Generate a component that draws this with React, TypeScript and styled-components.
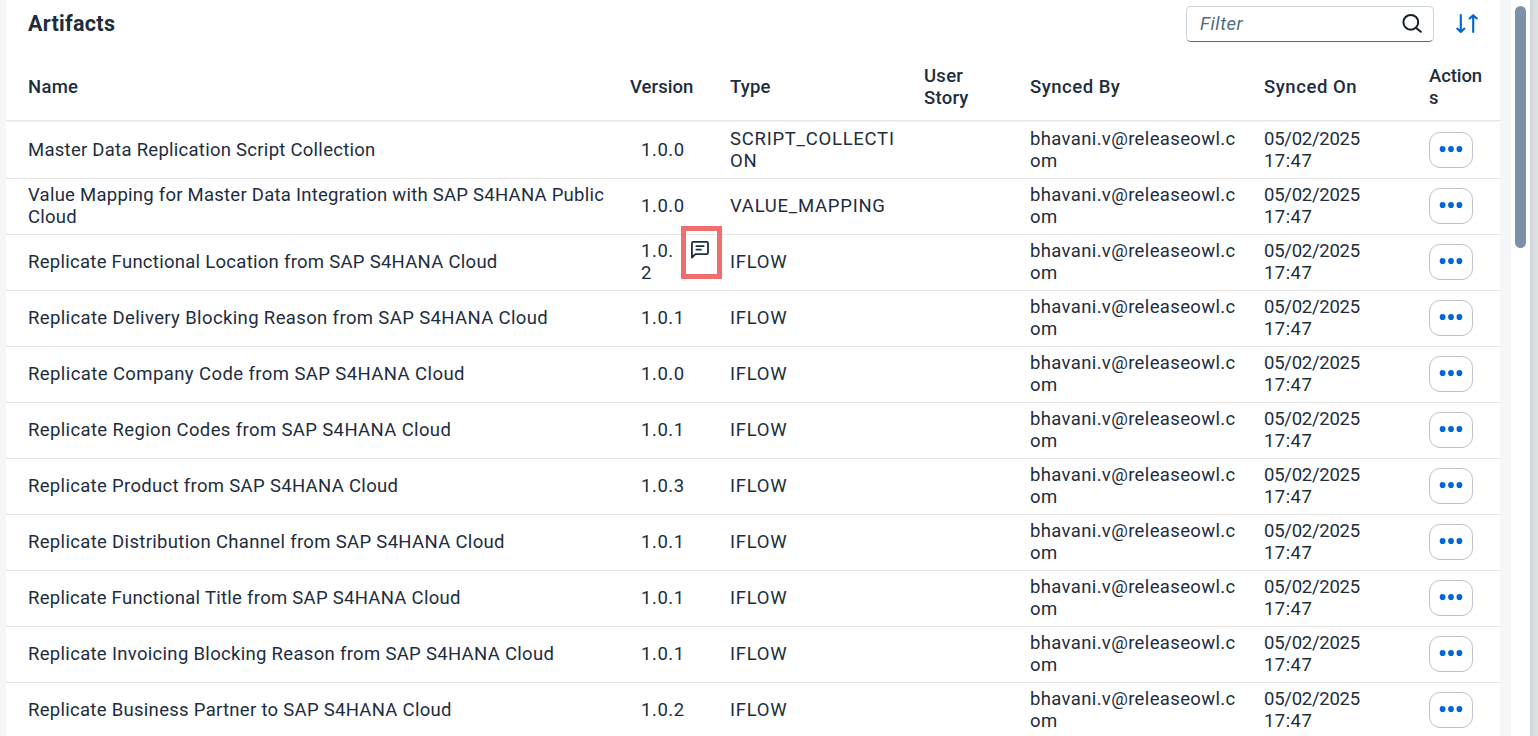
import React from "react";
import styled, { createGlobalStyle } from "styled-components";

const GlobalStyle = createGlobalStyle`
  * { box-sizing: border-box; }
  body {
    margin: 0;
    overflow: hidden;
    background: #ffffff;
    color: #1d2d3e;
    font: 400 18.5px/22px Roboto, "Noto Sans", sans-serif;
  }
`;

const Page = styled.div`
  display: flex;
  width: 1538px;
  height: 736px;
  overflow: hidden;
  background: #f5f6f7;
`;

const Panel = styled.main`
  width: 1494px;
  margin-left: 6px;
  background: #ffffff;
`;

const Toolbar = styled.header`
  display: flex;
  align-items: center;
  height: 54px;
  padding: 0 21px 6px 22px;
`;

const Title = styled.h1`
  flex: 1;
  margin: 0;
  padding-bottom: 1px;
  font-size: 21.5px;
  line-height: 26px;
  font-weight: 700;
  letter-spacing: 0.3px;
`;

const FilterField = styled.label`
  display: flex;
  align-items: center;
  justify-content: space-between;
  width: 248px;
  height: 36px;
  padding: 0 10px 0 13px;
  border: 1px solid #ccd5dd;
  border-bottom-color: #556b82;
  border-radius: 5px;
`;

const FilterInput = styled.input`
  width: 180px;
  padding: 0;
  border: 0;
  outline: 0;
  background: none;
  color: inherit;
  font: inherit;
  letter-spacing: 0.5px;
  &::placeholder {
    color: #556b82;
    font-style: italic;
    opacity: 1;
  }
`;

const SortButton = styled.button`
  display: flex;
  margin-left: 21px;
  padding: 0;
  border: 0;
  background: none;
  color: #0064d9;
`;

const Row = styled.div`
  display: grid;
  grid-template-columns: 602px 100px 194px 106px 234px 165px 1fr;
  align-items: center;
  height: 56px;
  padding-left: 22px;
  border-bottom: 1px solid #e5e5e5;
`;

const HeadRow = styled(Row)`
  height: 67px;
  font-weight: 500;
  box-shadow: 0 1px 0 #f4f4f4;
`;

const FirstRow = styled(Row)`
  height: 58px;
  padding-top: 2px;
`;

const HeadCell = styled.div<{ $track?: number }>`
  white-space: pre;
  letter-spacing: ${(p) => p.$track ?? 0.05}px;
`;

const Cell = styled(HeadCell)`
  padding-bottom: 2px;
`;

const VersionCell = styled(Cell)`
  position: relative;
  padding-left: 11px;
`;

const Time = styled.div`
  letter-spacing: 0.45px;
`;

const Highlight = styled.div`
  position: absolute;
  left: 51px;
  top: -14px;
  width: 41px;
  height: 53px;
  padding: 9px 0 0 4px;
  border: 5px solid rgba(238, 86, 86, 0.86);
`;

const ActionButton = styled.button`
  display: flex;
  align-items: center;
  justify-content: center;
  width: 44px;
  height: 36px;
  margin-top: -1px;
  padding: 0 0 2px;
  border: 1px solid #bcc3ca;
  border-radius: 11px;
  background: #ffffff;
  color: #0064d9;
`;

const Gutter = styled.div`
  width: 11px;
`;

const ScrollTrack = styled.div`
  width: 19px;
  padding: 6px 4px 0;
  background: #ffffff;
`;

const ScrollThumb = styled.div`
  width: 11px;
  height: 242px;
  border-radius: 6px;
  background: #7b91a8;
`;

const Backdrop = styled.div`
  flex: 1;
  background: linear-gradient(90deg, #cdd2d6 0, #d9dde1 3px, #dde2e5 8px);
`;

const SearchIcon = () => (
  <svg width="22" height="22" viewBox="0 0 22 22" fill="none" stroke="#131e29" strokeWidth="2" strokeLinecap="round">
    <circle cx="9.8" cy="9.3" r="7.4" />
    <path d="M15.2 15 19.8 18.8" />
  </svg>
);

const SortIcon = () => (
  <svg width="24" height="22" viewBox="0 0 24 22" fill="none" stroke="currentColor" strokeWidth="2.1" strokeLinecap="round" strokeLinejoin="round">
    <path d="M5.8 2v16.8M2.2 15.6l3.6 3.3 3.6-3.3M18.2 19V2.2M14.6 5.5l3.6-3.3 3.6 3.3" />
  </svg>
);

const NoteIcon = () => (
  <svg width="20" height="20" viewBox="0 0 20 20" fill="none" stroke="#1d2d3e" strokeWidth="1.8" strokeLinecap="round" strokeLinejoin="round">
    <path d="M1.9 17.6V3.2Q1.9 1.9 3.2 1.9H16.7Q18 1.9 18 3.2V12.8Q18 14.1 16.7 14.1H5.4Z" />
    <path d="M6.4 6.2h7.2M6.4 9.7h4.5" />
  </svg>
);

const MoreIcon = () => (
  <svg width="24" height="8" viewBox="0 0 24 8" fill="currentColor">
    <ellipse cx="3.6" cy="4" rx="2.9" ry="3.1" />
    <ellipse cx="12" cy="4" rx="2.9" ry="3.1" />
    <ellipse cx="20.4" cy="4" rx="2.9" ry="3.1" />
  </svg>
);

type Artifact = { name: string; track: number; version: string; type: string; note?: boolean };

const artifacts: Artifact[] = [
  { name: "Master Data Replication Script Collection", track: 0.27, version: "1.0.0", type: "SCRIPT_COLLECTI\nON" },
  { name: "Value Mapping for Master Data Integration with SAP S4HANA Public\nCloud", track: 0.25, version: "1.0.0", type: "VALUE_MAPPING" },
  { name: "Replicate Functional Location from SAP S4HANA Cloud", track: 0.28, version: "1.0.\n2", type: "IFLOW", note: true },
  { name: "Replicate Delivery Blocking Reason from SAP S4HANA Cloud", track: 0.37, version: "1.0.1", type: "IFLOW" },
  { name: "Replicate Company Code from SAP S4HANA Cloud", track: 0.41, version: "1.0.0", type: "IFLOW" },
  { name: "Replicate Region Codes from SAP S4HANA Cloud", track: 0.37, version: "1.0.1", type: "IFLOW" },
  { name: "Replicate Product from SAP S4HANA Cloud", track: 0.32, version: "1.0.3", type: "IFLOW" },
  { name: "Replicate Distribution Channel from SAP S4HANA Cloud", track: 0.33, version: "1.0.1", type: "IFLOW" },
  { name: "Replicate Functional Title from SAP S4HANA Cloud", track: 0.28, version: "1.0.1", type: "IFLOW" },
  { name: "Replicate Invoicing Blocking Reason from SAP S4HANA Cloud", track: 0.31, version: "1.0.1", type: "IFLOW" },
  { name: "Replicate Business Partner to SAP S4HANA Cloud", track: 0.29, version: "1.0.2", type: "IFLOW" },
];

const ArtifactRow = ({ item, first }: { item: Artifact; first: boolean }) => {
  const Line = first ? FirstRow : Row;
  return (
    <Line>
      <Cell $track={item.track}>{item.name}</Cell>
      <VersionCell $track={0.55}>
        {item.version}
        {item.note && (
          <Highlight>
            <NoteIcon />
          </Highlight>
        )}
      </VersionCell>
      <Cell $track={0.74}>{item.type}</Cell>
      <Cell />
      <Cell $track={0.36}>{"bhavani.v@releaseowl.c\nom"}</Cell>
      <Cell $track={-0.26}>
        05/02/2025
        <Time>17:47</Time>
      </Cell>
      <ActionButton aria-label="More actions">
        <MoreIcon />
      </ActionButton>
    </Line>
  );
};

export default function App() {
  return (
    <Page>
      <GlobalStyle />
      <Panel>
        <Toolbar>
          <Title>Artifacts</Title>
          <FilterField>
            <FilterInput placeholder="Filter" />
            <SearchIcon />
          </FilterField>
          <SortButton aria-label="Sort">
            <SortIcon />
          </SortButton>
        </Toolbar>
        <HeadRow>
          <HeadCell $track={0.3}>Name</HeadCell>
          <HeadCell>Version</HeadCell>
          <HeadCell $track={0.15}>Type</HeadCell>
          <HeadCell $track={0.25}>{"User\nStory"}</HeadCell>
          <HeadCell $track={0.5}>Synced By</HeadCell>
          <HeadCell $track={0.55}>Synced On</HeadCell>
          <HeadCell $track={-0.1}>{"Action\ns"}</HeadCell>
        </HeadRow>
        {artifacts.map((item, i) => (
          <ArtifactRow key={item.name} item={item} first={i === 0} />
        ))}
      </Panel>
      <Gutter />
      <ScrollTrack>
        <ScrollThumb />
      </ScrollTrack>
      <Backdrop />
    </Page>
  );
}
